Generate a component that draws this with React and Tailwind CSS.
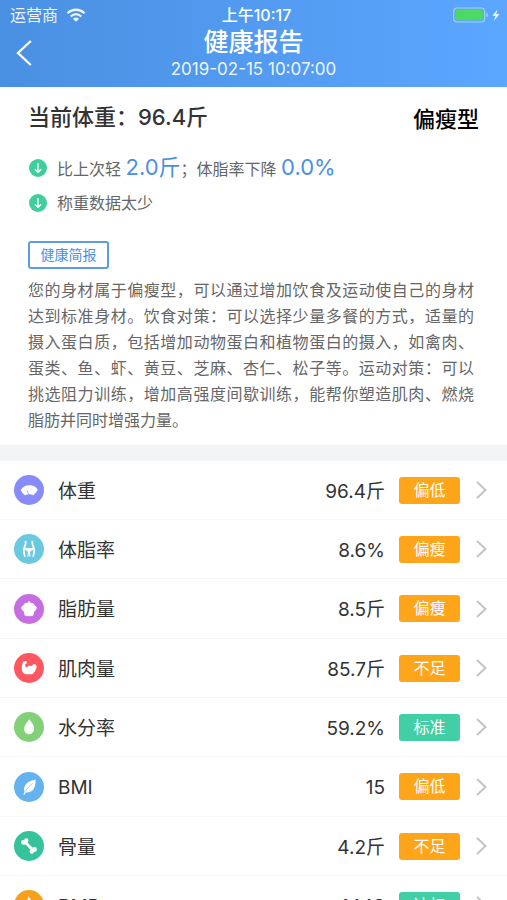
import React from "react";

const weightIcon = (
  <>
    <path
      fill="#fff"
      d="M6.700 15.200C8 12.200 11 10.200 15.200 10.200s7.400 2 8.600 4.800c-1.300 2-2.700 3.800-4.300 5.300-1.300-.7-2.700-1-4.200-1s-3 .3-4.400 1c-1.700-1.400-3.100-3.100-4.200-5.100z"
    />
    <path d="M13 15.500l1.700 3.900" stroke="#878cfa" strokeWidth=".7" />
  </>
);

const bodyFatIcon = (
  <>
    <path
      d="M11.600 6.800c.5 3-.1 4.300-1.100 6.200-1.200 2.300-1 4.600-.3 6.500l.7 3.300M18.400 6.800c-.5 3 .1 4.300 1.100 6.200 1.200 2.300 1 4.600.3 6.500l-.7 3.300"
      stroke="#fff"
      strokeWidth="1.700"
    />
    <path fill="#fff" d="M10.200 13.200c3.200 1.200 6.400 1.200 9.600 0l.4 2.600c-1.800.3-3.300 1-4.200 2.100l.6 4.900h-1l-.6-4-.6 4h-1l.6-4.900c-.9-1.100-2.400-1.800-4.200-2.100z" />
  </>
);

const fatIcon = (
  <path
    fill="#fff"
    stroke="#fff"
    strokeWidth="1"
    strokeLinejoin="round"
    d="M15 7.500l1.500 1.700 2.800.6.900 1.700 2.200 1.700-.7 2.600-1.900 1.600-.9 3.800-1.700.5h-4.400l-1.700-.5-.9-3.800-1.900-1.600-.7-2.600 2.200-1.700.9-1.700 2.800-.6z"
  />
);

const muscleIcon = (
  <path
    fill="#fff"
    d="M9.300 8.600l2.600-.5c1 .1 1.300 1.100.9 2.200l-1.600.9c-.2 1.400.3 2.600 1.600 3.300 1-1.700 2.900-2.300 4.500-1.300 1-1.500 2.300-2.300 3.600-1.900 1.600.6 2 2.300 1.300 4-.8 2.700-2 4.600-4.100 5.900H11c-2.100-1.200-3.200-2.800-3.200-5.400 0-2.700.4-5.200 1.500-7.200z"
  />
);

const waterIcon = (
  <>
    <path fill="#fff" d="M15.400 7.300c2.600 3.400 4.700 6.300 4.700 9.200 0 3.400-2.100 5.700-5 5.700s-4.900-2.300-4.900-5.500c0-3.100 2.400-6 5.200-9.400z" />
    <path fill="#d9f1d4" d="M18.700 14.500c.9 3.300-.4 5.700-3.700 6.600 2.400-.2 4.200-1.700 4.100-4.200 0-.9-.2-1.700-.4-2.400z" />
  </>
);

const leafIcon = (
  <>
    <path fill="#fff" d="M21.900 7.400c-5.900 1-10 3.500-11.400 7.300-.7 1.900-.5 3.700.1 5.100l-1.300 2.800.9.400 1.500-2.600c4.200.2 7.300-1.400 8.500-4.500l.6-1.500c.8-2 .5-4.500 1.100-7z" />
    <path stroke="#64b3ee" strokeWidth=".6" d="M11.500 19.500c1.400-3.200 3.900-5.700 7.300-8.200" />
  </>
);

const boneIcon = (
  <g fill="#fff">
    <circle cx="9.400" cy="11.300" r="2.400" />
    <circle cx="12.200" cy="9.400" r="2.200" />
    <circle cx="17.800" cy="20.600" r="2.200" />
    <circle cx="20.500" cy="18.500" r="2.400" />
    <path d="M9.200 13.100l3.700-4.100 1.200 3.300 4.300 4.100 3.100.6-3.800 4.100-1.600-2.800-4.100-4.200z" />
  </g>
);

const flameIcon = (
  <path fill="#fff" d="M14.200 6.500c2.800 2 3 4.200 3.200 5.600l1.500-1.300c1.500 2.200 2 4.300 1.600 6.400-.5 3-2.600 5-5.500 5s-5.300-2.200-5.300-5.200c0-3.800 4.200-5.400 4.500-10.500z" />
);

const metrics = [
  { label: "体重", value: "96.4斤", status: "偏低", badge: "bg-[#ffa519]", circle: "bg-[#878cfa]", icon: weightIcon },
  { label: "体脂率", value: "8.6%", status: "偏瘦", badge: "bg-[#ffa519]", circle: "bg-[#6ac9e0]", icon: bodyFatIcon },
  { label: "脂肪量", value: "8.5斤", status: "偏瘦", badge: "bg-[#ffa519]", circle: "bg-[#c76de2]", icon: fatIcon },
  { label: "肌肉量", value: "85.7斤", status: "不足", badge: "bg-[#ffa519]", circle: "bg-[#ff5761]", icon: muscleIcon },
  { label: "水分率", value: "59.2%", status: "标准", badge: "bg-[#42cfa5]", circle: "bg-[#82d077]", icon: waterIcon },
  { label: "BMI", value: "15", status: "偏低", badge: "bg-[#ffa519]", circle: "bg-[#64b3ee]", icon: leafIcon },
  { label: "骨量", value: "4.2斤", status: "不足", badge: "bg-[#ffa519]", circle: "bg-[#35c39c]", icon: boneIcon },
  { label: "BMR", value: "1448", status: "达标", badge: "bg-[#42cfa5]", circle: "bg-[#f7a01b]", icon: flameIcon },
];

function StatusBar() {
  return (
    <div className="grid h-[30px] grid-cols-[1fr_auto_1fr] items-center pr-1 pl-[10px] text-base leading-none">
      <div className="flex items-center gap-2 opacity-90">
        <span>运营商</span>
        <svg className="h-[14px] w-5" viewBox="0 0 20 14" fill="none" aria-hidden="true">
          <path d="M1.500 5.200c5-4.600 12-4.600 17 0" stroke="#fff" strokeWidth="2.400" />
          <path d="M4.700 8.500c3.300-2.900 7.300-2.900 10.600 0" stroke="#fff" strokeWidth="2.300" />
          <path d="M6.900 10.700c2-1.600 4.200-1.600 6.200 0L10 13.800z" fill="#fff" />
        </svg>
      </div>
      <span className="font-medium">上午10:17</span>
      <svg className="h-4 w-[50px] justify-self-end" viewBox="0 0 50 16" aria-hidden="true">
        <rect x=".7" y="1" width="31" height="14" rx="3.500" fill="none" stroke="#a8cdfb" strokeWidth="1.200" />
        <rect x="2.500" y="2.800" width="27.400" height="10.400" rx="1.500" fill="#4cd964" />
        <path d="M33.500 5.700c2 .8 2 3.800 0 4.600z" fill="#a8cdfb" />
        <path d="M44.500 2.500l-5 6.300h3.200l-1.800 5 5.500-6.600h-3.300z" fill="#fff" />
      </svg>
    </div>
  );
}

function DownBadge() {
  return (
    <svg className="size-[18px] shrink-0" viewBox="0 0 18 18" fill="none" aria-hidden="true">
      <circle cx="9" cy="9" r="9" fill="#3fcf9f" />
      <path d="M9 4v9M5.800 10.200 9 13.300l3.200-3.100" stroke="#fff" strokeWidth="1.300" />
    </svg>
  );
}

export default function App() {
  return (
    <div className="flex h-screen flex-col overflow-hidden bg-white font-['Inter','Noto_Sans_CJK_SC',sans-serif] text-[#333]">
      <header className="shrink-0 bg-linear-to-r from-[#4a90e2] to-[#5ba6ff] text-white">
        <StatusBar />
        <div className="grid h-[57px] grid-cols-[48px_1fr_48px]">
          <button type="button" aria-label="返回" className="flex items-center pb-3 pl-4">
            <svg className="h-7 w-4" viewBox="0 0 16 28" fill="none" aria-hidden="true">
              <path d="M14.800 2 2 14l12.800 12" stroke="#fff" strokeWidth="2.300" />
            </svg>
          </button>
          <div className="text-center">
            <h1 className="text-[25px] leading-6 font-medium">健康报告</h1>
            <p className="mt-1 text-[17px] leading-[22px] opacity-90">2019-02-15 10:07:00</p>
          </div>
        </div>
      </header>

      <main className="min-h-0 flex-1 overflow-y-auto [scrollbar-width:none]">
        <section className="px-7 pt-[14px] pb-3">
          <div className="flex items-center justify-between">
            <h2 className="text-[22px] leading-7 font-medium">当前体重：96.4斤</h2>
            <span className="pt-1 text-[22px] leading-7 font-medium text-black">偏瘦型</span>
          </div>
          <div className="mt-[18px] flex h-[34px] items-center gap-[10px] pl-px text-base text-[#666]">
            <DownBadge />
            <p>
              比上次轻 <span className="text-[22px] leading-none text-[#4a90e2]">2.0斤</span>；体脂率下降{" "}
              <span className="text-[22px] leading-none text-[#4a90e2]">0.0%</span>
            </p>
          </div>
          <div className="flex h-9 items-center gap-[10px] pl-px text-base text-[#666]">
            <DownBadge />
            <p>称重数据太少</p>
          </div>
          <button
            type="button"
            className="mt-5 block h-7 w-[81px] rounded-[3px] border-2 border-[#5c9ce6] text-sm leading-6 text-[#4a90e2]"
          >
            健康简报
          </button>
          <p className="mt-2 mr-[5px] text-justify text-base leading-[26px] text-[#666]">
            您的身材属于偏瘦型，可以通过增加饮食及运动使自己的身材达到标准身材。饮食对策：可以选择少量多餐的方式，适量的摄入蛋白质，包括增加动物蛋白和植物蛋白的摄入，如禽肉、蛋类、鱼、虾、黄豆、芝麻、杏仁、松子等。运动对策：可以挑选阻力训练，增加高强度间歇训练，能帮你塑造肌肉、燃烧脂肪并同时增强力量。
          </p>
        </section>

        <div className="h-4 bg-[#f2f4f6]" />

        <ul>
          {metrics.map((m) => (
            <li key={m.label} className="h-[59px] border-b border-[#f7f7f8] nth-[3n]:h-[60px]">
              <button type="button" className="flex h-full w-full items-center pr-5 pl-[14px] text-left text-[19px]">
                <span className={`size-[30px] shrink-0 rounded-full ${m.circle}`}>
                  <svg className="size-[30px]" viewBox="0 0 30 30" fill="none" aria-hidden="true">
                    {m.icon}
                  </svg>
                </span>
                <span className="ml-[14px] flex-1 pt-1">{m.label}</span>
                <span className="pt-1">{m.value}</span>
                <span className={`ml-[14px] h-[27px] w-[61px] rounded-[3px] text-center text-base leading-[27px] text-white ${m.badge}`}>
                  {m.status}
                </span>
                <svg className="ml-4 h-[18px] w-[11px]" viewBox="0 0 11 18" fill="none" aria-hidden="true">
                  <path d="M1 1l8.500 8L1 17" stroke="#c4c4c8" strokeWidth="2" />
                </svg>
              </button>
            </li>
          ))}
        </ul>
      </main>
    </div>
  );
}
